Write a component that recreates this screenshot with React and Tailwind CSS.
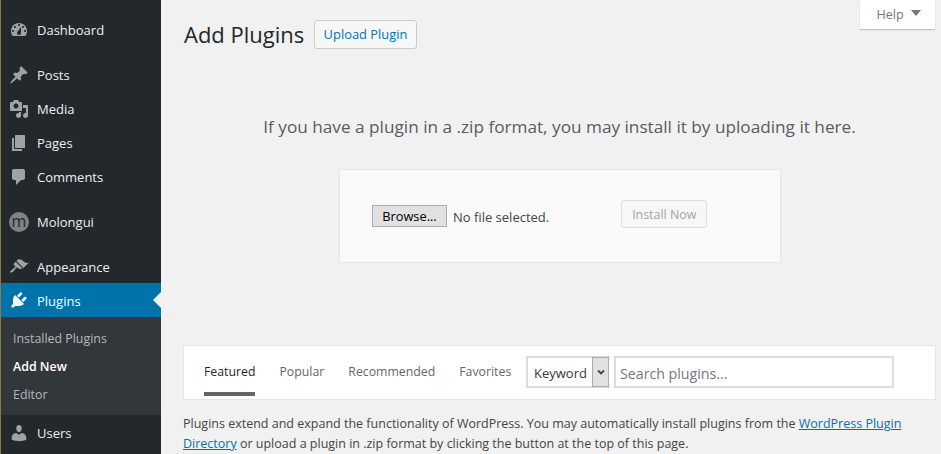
import React from 'react';

const icons = {
  dashboard: 'M3.76 16h12.48c1.1-1.37 1.76-3.11 1.76-5 0-4.42-3.58-8-8-8s-8 3.58-8 8c0 1.89.66 3.63 1.76 5zM10 4c.55 0 1 .45 1 1s-.45 1-1 1-1-.45-1-1 .45-1 1-1zM6 6c.55 0 1 .45 1 1s-.45 1-1 1-1-.45-1-1 .45-1 1-1zm8 0c.55 0 1 .45 1 1s-.45 1-1 1-1-.45-1-1 .45-1 1-1zm-5.37 5.55L12 7v6c0 1.1-.9 2-2 2s-2-.9-2-2c0-.57.24-1.08.63-1.45zM4 10c.55 0 1 .45 1 1s-.45 1-1 1-1-.45-1-1 .45-1 1-1zm12 0c.55 0 1 .45 1 1s-.45 1-1 1-1-.45-1-1 .45-1 1-1z',
  posts: 'M10.44 3.02l1.82-1.82 6.36 6.35-1.83 1.82c-1.05-.68-2.48-.57-3.41.36l-.75.75c-.92.93-1.04 2.35-.35 3.41l-1.83 1.82-2.41-2.41-2.8 2.79c-.42.42-3.38 2.71-3.8 2.29s1.86-3.39 2.28-3.81l2.79-2.79L4.1 9.36l1.83-1.82c1.05.69 2.48.57 3.4-.36l.75-.75c.93-.92 1.05-2.35.36-3.41z',
  media: 'M13 11V4c0-.55-.45-1-1-1h-1.67L9 1H5L3.67 3H2c-.55 0-1 .45-1 1v7c0 .55.45 1 1 1h10c.55 0 1-.45 1-1zM7 4.5c1.38 0 2.5 1.12 2.5 2.5S8.38 9.5 7 9.5 4.5 8.38 4.5 7 5.62 4.5 7 4.5zM14 6h5v10.5c0 1.38-1.12 2.5-2.5 2.5S14 17.88 14 16.5s1.12-2.5 2.5-2.5c.17 0 .34.02.5.05V9h-3V6zm-4 8.05V13h2v3.5c0 1.38-1.12 2.5-2.5 2.5S7 17.88 7 16.5 8.12 14 9.5 14c.17 0 .34.02.5.05z',
  pages: 'M6 15V2h10v13H6zm-1 1h8v2H3V5h2v11z',
  comments: 'M5 2h9c1.1 0 2 .9 2 2v7c0 1.1-.9 2-2 2h-2l-5 5v-5H5c-1.1 0-2-.9-2-2V4c0-1.1.9-2 2-2z',
  appearance: 'M14.48 11.06L7.41 3.99l1.5-1.5c.5-.56 2.3-.47 3.51.32 1.21.8 1.43 1.28 2.91 2.1 1.18.64 2.45 1.26 4.45.85zm-.71.71L6.7 4.7 4.93 6.47c-.39.39-.39 1.02 0 1.41l1.06 1.06c.39.39.39 1.03 0 1.42-.6.6-1.43 1.11-2.21 1.69-.35.26-.7.53-1.01.84C1.43 13.23.78 14.87 1.3 15.4c.53.53 2.17-.13 3.5-1.47.31-.31.58-.66.84-1.01.58-.78 1.09-1.61 1.69-2.21.39-.39 1.02-.39 1.41 0l1.06 1.06c.39.39 1.02.39 1.41 0z',
  plugins: 'M13.11 4.36L9.87 7.6 8 5.73l3.24-3.24c.35-.34 1.05-.2 1.56.32.52.51.66 1.21.31 1.55zm-8 1.77l.91-1.12 9.01 9.01-1.19.84c-.71.71-2.63 1.16-3.82 1.16H6.14L4.9 17.26c-.59.59-1.54.59-2.12 0-.59-.58-.59-1.53 0-2.12l1.24-1.24v-3.88c0-1.13.4-3.19 1.09-3.89zm7.26 3.97l3.24-3.24c.34-.35 1.04-.21 1.55.31.52.51.66 1.21.31 1.55l-3.24 3.25z',
  users: 'M10 9.25c-2.27 0-2.73-3.44-2.73-3.44C7 4.02 7.82 2 9.97 2c2.16 0 2.98 2.02 2.71 3.81 0 0-.41 3.44-2.68 3.44zm0 2.57L12.72 10c2.39 0 4.52 2.33 4.52 4.53v2.49s-3.65 1.13-7.24 1.13c-3.65 0-7.24-1.13-7.24-1.13v-2.49c0-2.25 1.94-4.48 4.47-4.48z',
};

function Icon({ name, className }) {
  return (
    <svg viewBox="0 0 20 20" className={`w-5 h-5 shrink-0 fill-current ${className}`}>
      <path d={icons[name]} />
    </svg>
  );
}

function MenuItem({ icon, label, className = '' }) {
  return (
    <div className={`flex items-center h-[34px] pl-[8px] ${className}`}>
      <Icon name={icon} className="text-[#9ea3a8]" />
      <span className="ml-2 pt-[2px] text-[13px] text-[#eeeeee]">{label}</span>
    </div>
  );
}

function Sidebar() {
  return (
    <aside className="w-[161px] shrink-0 bg-[#23282d] pt-[13px] border-l border-[#8a7a45] overflow-hidden">
      <MenuItem icon="dashboard" label="Dashboard" />
      <div className="mt-[11px]">
        <MenuItem icon="posts" label="Posts" />
        <MenuItem icon="media" label="Media" />
        <MenuItem icon="pages" label="Pages" />
        <MenuItem icon="comments" label="Comments" />
      </div>
      <div className="flex items-center h-[34px] pl-[8px] mt-[11px]">
        <span className="flex items-center justify-center w-5 h-5 rounded-full bg-[#7f8387] text-[#23282d] text-[16px] leading-none pb-[2px]">m</span>
        <span className="ml-2 pt-[2px] text-[13px] text-[#eeeeee]">Molongui</span>
      </div>
      <MenuItem icon="appearance" label="Appearance" className="mt-[11px]" />
      <div className="relative -mt-px flex items-center h-[34px] pl-[8px] bg-[#0073aa]">
        <Icon name="plugins" className="text-white" />
        <span className="ml-2 pt-[4px] text-[13px] text-white">Plugins</span>
        <span className="absolute right-0 top-[9px] border-y-[8px] border-r-[8px] border-y-transparent border-r-[#f1f1f1]" />
      </div>
      <div className="h-[98px] bg-[#32373c] pt-[8px] pl-[12px] text-[12.4px] text-[#b4b9be]">
        <div className="h-[28px] leading-[28px]">Installed Plugins</div>
        <div className="h-[28px] leading-[28px] font-semibold text-white">Add New</div>
        <div className="h-[28px] leading-[28px]">Editor</div>
      </div>
      <MenuItem icon="users" label="Users" className="mt-px" />
    </aside>
  );
}

export default function App() {
  return (
    <div className="flex h-[454px] w-[941px] overflow-hidden bg-[#f1f1f1] font-['Open_Sans',sans-serif]">
      <Sidebar />
      <main className="relative flex-1 min-w-0 pl-[22px] pr-[5px]">
        <div className="absolute right-[6px] top-0 flex items-center justify-center gap-[7px] w-[75px] h-[29px] pt-[2px] pl-[2px] bg-white shadow-[0_1px_1px_rgba(0,0,0,0.2)] text-[12.6px] text-[#72777c]">
          Help
          <span className="mb-[5px] border-x-[5px] border-t-[6px] border-x-transparent border-t-[#72777c]" />
        </div>

        <div className="flex items-center pt-[20px] h-[49px]">
          <h1 className="w-[121px] ml-px whitespace-nowrap text-[22px] leading-[29px] text-[#23282d] font-normal">Add Plugins</h1>
          <button className="ml-[9px] h-[29px] w-[103px] rounded-[3px] border border-[#cccccc] bg-[#f7f7f7] text-[12.9px] font-medium text-[#0073aa]">Upload Plugin</button>
        </div>

        <p className="mt-[66px] text-center text-[17.2px] leading-[24px] text-[#555d66]">If you have a plugin in a .zip format, you may install it by uploading it here.</p>

        <div className="mt-[30px] ml-[156px] w-[442px] h-[94px] border border-[#e5e5e5] bg-[#fafafa] flex items-center pl-[32px]">
          <button className="w-[75px] h-[22px] pt-px bg-[#e1e1e1] border border-[#adadad] text-[12.8px] leading-none text-black">Browse...</button>
          <span className="ml-[6px] pt-[3px] text-[13px] text-[#444444]">No file selected.</span>
          <button disabled className="ml-[72px] mb-[4px] pt-[2px] w-[86px] h-[28px] rounded-[3px] border border-[#dddddd] bg-[#f7f7f7] text-[12.4px] text-[#a0a5aa]">Install Now</button>
        </div>

        <div className="mt-[82px] w-[753px] h-[55px] border border-[#e5e5e5] bg-white flex items-start pl-[20px]">
          <nav className="flex gap-[24px] w-[322px] text-[12.3px] text-[#666666]">
            <span className="h-[50px] leading-[52px] border-b-4 border-[#666666] text-[#23282d]">Featured</span>
            <span className="h-[50px] leading-[52px]">Popular</span>
            <span className="h-[50px] leading-[52px]">Recommended</span>
            <span className="h-[50px] leading-[52px]">Favorites</span>
          </nav>
          <div className="mt-[10px] flex items-center w-[84px] h-[32px] border-2 border-r-0 border-[#dddddd] bg-white text-[13px] text-[#32373c]">
            <span className="flex-1 pl-[6px] pt-[4px]">Keyword</span>
            <span className="mr-px flex items-center justify-center w-[17px] h-[30px] bg-[#e1e1e1] border border-[#adadad]">
              <svg viewBox="0 0 10 10" className="w-[10px] h-[10px]"><path d="M2 3.5L5 6.5L8 3.5" fill="none" stroke="#444" strokeWidth="1.8" /></svg>
            </span>
          </div>
          <input placeholder="Search plugins..." className="mt-[10px] ml-[4px] w-[280px] h-[32px] border-2 border-[#dddddd] bg-white px-[4px] pt-[2px] text-[14.2px] text-[#32373c] placeholder:text-[#72777c] outline-none" />
        </div>

        <p className="mt-[14px] w-[730px] text-[12.5px] leading-[20px] text-[#444444]">
          Plugins extend and expand the functionality of WordPress. You may automatically install plugins from the <a className="underline text-[#0073aa]">WordPress Plugin Directory</a> or upload a plugin in .zip format by clicking the button at the top of this page.
        </p>
      </main>
    </div>
  );
}
